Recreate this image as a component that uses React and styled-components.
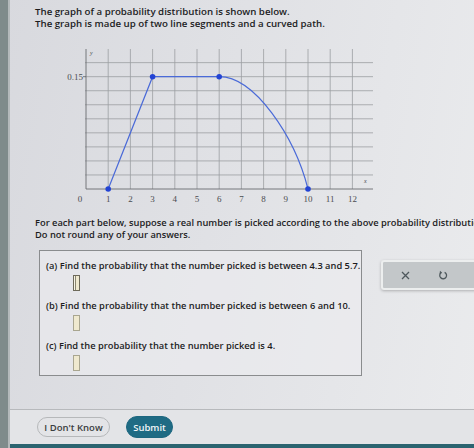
import React from 'react'
import styled, { createGlobalStyle } from 'styled-components'

const GlobalStyle = createGlobalStyle`
  html, body {
    margin: 0;
    padding: 0;
    background: #dcdde1;
  }
  body {
    font-family: "Open Sans", "DejaVu Sans", sans-serif;
    color: #1c1c1e;
  }
`

const Screen = styled.div`
  display: flex;
  width: 474px;
  height: 448px;
  overflow: hidden;
  background: linear-gradient(100deg, #d8d9de 0%, #e0e1e5 45%, #eaebed 100%);
`

const Bezel = styled.div`
  width: 8px;
  flex: none;
  background: #7f8b8b;
  border-right: 2px solid #b4b9bb;
`

const Page = styled.div`
  flex: 1;
  display: flex;
  flex-direction: column;
  min-width: 0;
`

const Content = styled.div`
  padding: 6px 0 0 25px;
  flex: 1;
  overflow: hidden;
`

const Para = styled.p`
  margin: 0;
  font-size: ${p => p.$size || 9.7}px;
  line-height: 12px;
  font-weight: 600;
  white-space: nowrap;
`

const GraphWrap = styled.div`
  margin: 14px 0 0 25px;
  width: 340px;
  height: 165px;
`

const Section = styled.div`
  margin-top: 8px;
`

const Row = styled.div`
  display: flex;
  align-items: flex-start;
  margin-top: 9px;
`

const AnswerBox = styled.div`
  margin-left: 4px;
  width: 323px;
  height: 126px;
  flex: none;
  box-sizing: border-box;
  border: 1px solid #8a8c8e;
  background: rgba(236, 237, 240, 0.6);
  padding: 9px 0 0 6px;
`

const Part = styled.div`
  margin-bottom: 9px;
`

const Question = styled.div`
  font-size: 9.3px;
  line-height: 12px;
  font-weight: 600;
  white-space: nowrap;
`

const Input = styled.div`
  margin: 3px 0 0 27px;
  width: 7px;
  height: 16px;
  box-sizing: border-box;
  border: 1px solid ${p => (p.$active ? '#6e6a5a' : '#a9a690')};
  background: #efe9cf;
  box-shadow: ${p => (p.$active ? 'inset 1px 0 0 #f7f4e6, inset 2px 0 0 #8a8570' : 'none')};
`

const Tools = styled.div`
  margin: 10px 0 0 19px;
  display: flex;
  align-items: center;
  gap: 26px;
  width: 100px;
  flex: none;
  height: 30px;
  box-sizing: border-box;
  padding-left: 16px;
  background: #c3c7c9;
  border: 2px solid #eceeee;
  border-right: none;
  border-radius: 3px 0 0 3px;
  box-shadow: 0 1px 3px rgba(0, 0, 0, 0.25);
  color: #4e585c;
`

const ToolButton = styled.span`
  display: flex;
  align-items: center;
  justify-content: center;
  width: 12px;
  height: 12px;
`

const Footer = styled.div`
  display: flex;
  align-items: center;
  gap: 16px;
  height: 34px;
  padding-left: 27px;
  border-top: 1px solid #b7b9bc;
  background: #e3e4e7;
`

const PillButton = styled.button`
  font-family: "Open Sans", "DejaVu Sans", sans-serif;
  font-size: 9.5px;
  font-weight: 600;
  white-space: nowrap;
  height: ${p => (p.$primary ? '22px' : '20px')};
  padding: 0;
  border-radius: 11px;
  border: 1px solid ${p => (p.$primary ? '#1d6780' : '#b6b8ba')};
  background: ${p => (p.$primary ? '#1f6b84' : 'transparent')};
  color: ${p => (p.$primary ? '#f2f6f8' : '#3a3d40')};
  width: ${p => p.$w}px;
`

const BottomStrip = styled.div`
  height: 4px;
  background: #2b6470;
`

// graph coordinates: 0.15 sits 8 grid steps above the x axis
const X0 = 26
const XU = 22.2
const Y0 = 145
const YU = 14.04
const px = x => X0 + x * XU
const py = y => Y0 - (y / 0.15) * 8 * YU

function Graph() {
  const verticals = Array.from({ length: 12 }, (_, i) => i + 1)
  const horizontals = Array.from({ length: 9 }, (_, i) => i + 1)
  return (
    <svg width="340" height="165" viewBox="0 0 340 165">
      {verticals.map(k => (
        <line key={'v' + k} x1={px(k)} y1="5" x2={px(k)} y2={Y0} stroke="#9c9ea2" strokeWidth="0.8" />
      ))}
      {horizontals.map(k => (
        <line key={'h' + k} x1={X0 - 1} y1={Y0 - k * YU} x2="313" y2={Y0 - k * YU} stroke="#9c9ea2" strokeWidth="0.8" />
      ))}
      <line x1={X0} y1="5" x2={X0} y2={Y0} stroke="#6a6c70" strokeWidth="0.9" />
      <line x1={X0} y1={Y0} x2="313" y2={Y0} stroke="#6a6c70" strokeWidth="0.9" />
      <line x1={X0 - 3} y1={py(0.15)} x2={X0} y2={py(0.15)} stroke="#6a6c70" strokeWidth="0.9" />

      <g fontFamily='"Liberation Serif", "DejaVu Serif", serif' fontSize="9" fill="#4a4c50">
        <text x={X0 - 3} y={py(0.15) + 3} textAnchor="end">0.15</text>
        <text x={X0 - 6} y={Y0 + 13} textAnchor="middle">0</text>
        {verticals.map(k => (
          <text key={'t' + k} x={px(k)} y={Y0 + 13} textAnchor="middle">{k}</text>
        ))}
        <text x={X0 + 4} y="11" fontSize="6" fontStyle="italic">y</text>
        <text x="304" y={Y0 - 6} fontSize="6" fontStyle="italic">x</text>
      </g>

      <path
        d={`M${px(1)} ${py(0)} L${px(3)} ${py(0.15)} L${px(6)} ${py(0.15)} C${px(7.6)} ${py(0.15)} ${px(9.4)} ${py(0.07)} ${px(10)} ${py(0)}`}
        fill="none"
        stroke="#4a6ad8"
        strokeWidth="1.2"
      />
      {[[1, 0], [3, 0.15], [6, 0.15], [10, 0]].map(([x, y]) => (
        <circle key={x} cx={px(x)} cy={py(y)} r="2.8" fill="#2344d4" />
      ))}
    </svg>
  )
}

export default function App() {
  return (
    <>
      <GlobalStyle />
      <Screen>
        <Bezel />
        <Page>
          <Content>
            <Para>The graph of a probability distribution is shown below.</Para>
            <Para>The graph is made up of two line segments and a curved path.</Para>
            <GraphWrap>
              <Graph />
            </GraphWrap>
            <Section>
              <Para $size={9.3}>
                For each part below, suppose a real number is picked according to the above probability distribution.
              </Para>
              <Para $size={9.3}>Do not round any of your answers.</Para>
            </Section>
            <Row>
              <AnswerBox>
                <Part>
                  <Question>(a) Find the probability that the number picked is between 4.3 and 5.7.</Question>
                  <Input $active />
                </Part>
                <Part>
                  <Question>(b) Find the probability that the number picked is between 6 and 10.</Question>
                  <Input />
                </Part>
                <Part>
                  <Question>(c) Find the probability that the number picked is 4.</Question>
                  <Input />
                </Part>
              </AnswerBox>
              <Tools>
                <ToolButton>
                  <svg width="9" height="9" viewBox="0 0 9 9">
                    <path d="M1 1 L8 8 M8 1 L1 8" stroke="currentColor" strokeWidth="1.3" />
                  </svg>
                </ToolButton>
                <ToolButton>
                  <svg width="10" height="10" viewBox="0 0 10 10">
                    <path d="M3.2 2.6 A3.4 3.4 0 1 0 6.6 2.3" fill="none" stroke="currentColor" strokeWidth="1.3" />
                    <path d="M2 0.8 L4.2 2.8 L1.6 3.8 Z" fill="currentColor" />
                  </svg>
                </ToolButton>
              </Tools>
            </Row>
          </Content>
          <Footer>
            <PillButton $w={73}>I Don't Know</PillButton>
            <PillButton $primary $w={47}>Submit</PillButton>
          </Footer>
          <BottomStrip />
        </Page>
      </Screen>
    </>
  )
}
